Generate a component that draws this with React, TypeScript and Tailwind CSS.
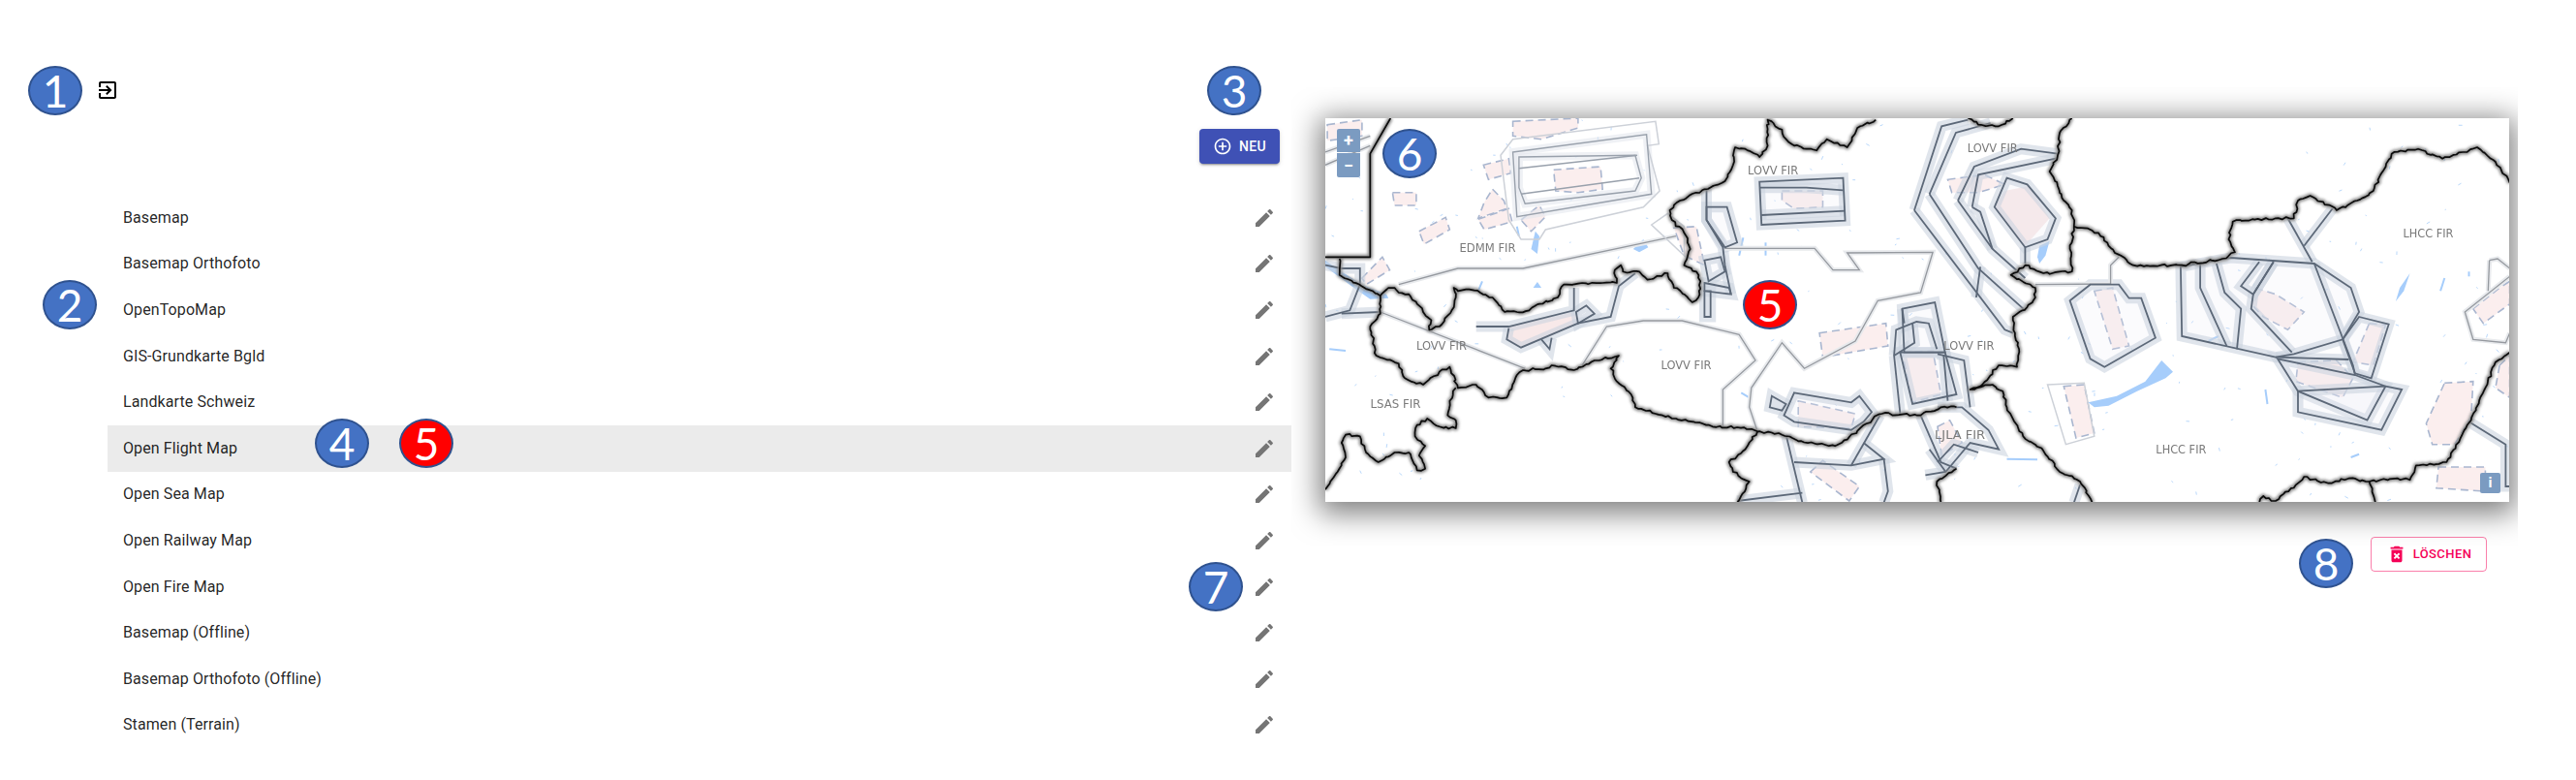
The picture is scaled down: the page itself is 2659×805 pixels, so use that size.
import React from "react";

const rows = [
  "Basemap",
  "Basemap Orthofoto",
  "OpenTopoMap",
  "GIS-Grundkarte Bgld",
  "Landkarte Schweiz",
  "Open Flight Map",
  "Open Sea Map",
  "Open Railway Map",
  "Open Fire Map",
  "Basemap (Offline)",
  "Basemap Orthofoto (Offline)",
  "Stamen (Terrain)",
];

type P = [number, number];
const parse = (s: string): P[] => s.trim().split(/\s+/).map((p) => p.split(",").map(Number) as P);
const a = (s: string): P[] => parse(s).map(([x, y]) => [(x - 20) / 2.376, (y - 65) / 3]);
const b = (s: string): P[] => parse(s).map(([x, y]) => [632 + x / 2.379, (y - 65) / 3]);
const str = (pts: P[]) => pts.map(([x, y]) => `${x.toFixed(1)},${y.toFixed(1)}`).join(" ");

let seed = 17;
const rnd = () => {
  seed = (seed * 16807) % 2147483647;
  return seed / 2147483647;
};
const wiggle = (pts: P[]) => {
  const out: P[] = [];
  for (let i = 0; i < pts.length - 1; i++) {
    const [x0, y0] = pts[i];
    const [x1, y1] = pts[i + 1];
    const len = Math.hypot(x1 - x0, y1 - y0);
    const n = Math.max(1, Math.round(len / 3.5));
    for (let k = 0; k < n; k++) {
      const t = k / n;
      const j = k === 0 ? 0 : 2.6;
      out.push([x0 + (x1 - x0) * t + (rnd() - 0.5) * j, y0 + (y1 - y0) * t + (rnd() - 0.5) * j]);
    }
  }
  out.push(pts[pts.length - 1]);
  return out;
};

const straightBorder: P[][] = [a("20,495 130,495 130,175 180,65")];
const borders: P[][] = [
  a("55,500 55,550 155,615 175,590 190,590 200,605 225,610 245,640 260,665 280,690 275,720 300,710 330,660 340,620 335,590 345,600 365,595 400,605 430,620 460,665 490,665 520,660 545,640 590,620 605,580 650,575 700,575 735,575 730,535 745,520 750,540 790,540 810,565 860,545 875,590 900,610 920,635 935,620 940,570 930,540 900,520 915,470 900,420 870,380 865,350 890,320 950,285 1000,260 1020,210 1025,155 1050,160 1085,185 1105,150 1105,70 1140,100 1150,130 1170,150 1225,165 1250,130 1300,155 1325,95 1370,70"),
  a("155,615 155,670 130,710 145,800 200,825 215,870 260,890 300,850 325,835 345,900 390,890 420,930 465,930 490,860 505,845 560,840 575,830 630,845 680,815 740,800 720,840 735,880 770,920 780,960 830,980 880,995 970,1020 1030,1022 1080,1035 1140,1045 1180,1065 1270,1080 1300,1060 1340,1015 1385,980 1480,985 1530,960 1568,960"),
  a("340,900 325,940 320,985 340,1000 340,1025 300,1020 270,995 245,1015 240,1050 265,1080 250,1110 265,1150 245,1155 225,1100 190,1100 150,1130 120,1100 105,1050 70,1045 60,1070 70,1115 50,1160 20,1215"),
  a("1080,1035 1050,1090 1010,1130 1020,1160 1060,1190 1030,1255"),
  a("1568,1150 1520,1190 1530,1255"),
  b("75,65 100,85 150,90 185,65"),
  b("330,65 300,110 295,180 275,230 295,275 310,320 330,350 335,400 360,405 395,420 420,460 450,490 480,520 600,520 700,500 730,480 715,440 725,385 830,375 875,375 885,320 915,305 980,350 1030,320 1070,290 1090,235 1115,175 1180,160 1240,190 1290,170 1325,155 1370,200 1405,265"),
  b("335,400 325,470 330,540 260,545 215,520 180,550 240,590 240,620 220,650 185,680 190,730 200,780 195,835 150,830 110,890 80,905 135,890 160,910 170,960 210,1050 260,1095 300,1160 350,1190 380,1255"),
  b("790,1255 800,1235 830,1250 880,1200 900,1175 960,1195 1010,1180 1060,1190 1075,1255"),
  b("1060,1190 1130,1180 1160,1185 1175,1140 1250,1130 1290,1040 1310,1000 1345,900 1370,820 1405,790"),
];

const pink: P[][] = [
  a("25,85 110,70 110,120 25,135"),
  a("480,75 640,65 640,95 550,130 480,120"),
  a("580,225 695,215 700,285 640,295 585,290"),
  a("408,210 470,190 475,235 420,255"),
  a("185,295 243,295 243,335 190,335"),
  a("250,415 315,372 325,410 262,455"),
  a("430,285 458,320 465,345 395,375 410,325"),
  a("395,378 470,345 478,385 410,410"),
  a("500,380 545,335 560,370 525,415"),
  a("110,560 160,495 178,535 120,580"),
  a("1140,290 1240,290 1240,340 1170,345 1140,320"),
  a("875,405 930,400 950,520 900,490"),
  a("1232,730 1395,700 1400,770 1240,805"),
  a("1435,790 1510,785 1530,920 1460,945"),
  a("1180,940 1320,980 1310,1025 1180,1020"),
  a("1210,1160 1240,1125 1330,1205 1305,1250"),
  b("25,255 115,240 165,270 100,295 35,295"),
  b("385,600 430,590 470,770 430,780"),
  b("310,895 360,890 385,1040 340,1055"),
  b("780,590 830,610 900,665 860,720 800,680 770,640"),
  b("1060,700 1100,705 1070,830 1020,820"),
  b("885,820 980,815 1020,870 995,930 880,880"),
  b("1315,655 1380,590 1405,570 1405,640 1340,700"),
  b("1245,885 1315,880 1310,990 1270,1075 1215,1075 1200,1010"),
  b("1230,1145 1345,1145 1345,1220 1225,1210"),
  b("1380,830 1405,800 1405,930 1370,900"),
  b("0,1020 30,1000 60,1070 10,1110"),
];
const solidPink: P[][] = [
  a("470,710 630,665 640,700 500,775 465,750"),
  b("140,340 165,290 225,275 275,375 215,460"),
];

const pale: P[][] = [
  a("480,170 808,115 820,300 490,370"),
  a("495,185 780,180 795,250 780,290 510,330 495,280"),
];
const paleOpen: P[][] = [a("495,220 785,180"), a("500,300 790,250")];
const closed: P[][] = [
  a("1085,262 1290,250 1295,382 1090,395"),
  a("955,340 1005,340 1030,450 1000,465 955,380"),
  a("950,505 990,495 1000,540 960,570"),
  a("950,575 1010,590 1015,610 950,600"),
  a("950,600 965,600 965,680 950,680"),
  a("635,665 660,645 680,670 640,700"),
  a("1115,925 1150,950 1140,970 1110,960"),
  a("1170,915 1310,945 1330,925 1360,975 1340,1005 1310,1030 1170,1005 1145,985"),
  a("1435,655 1515,635 1540,790 1440,790"),
  a("1430,790 1460,950 1568,920 1540,790"),
  b("325,630 375,580 445,580 470,622 500,622 535,745 410,835 375,810"),
  b("597,525 600,740 830,805 875,795 995,750 1035,665 1015,590 925,515 720,497"),
  b("1035,680 1108,703 1065,870 1025,855 995,750"),
  b("835,810 885,910 1055,1000 1100,895 1025,860"),
  b("885,910 885,975 1090,1030 1140,905 1100,895"),
  b("140,340 170,250 220,270 290,375 270,440 215,465"),
];
const open: P[][] = [
  a("1085,280 1200,280 1290,288"),
  a("1090,365 1295,352"),
  a("955,285 955,380 995,465 1000,520 1015,610"),
  a("630,590 630,660 470,710 390,710"),
  a("470,715 465,750 500,775 640,700 720,680 740,585 780,545"),
  a("550,750 570,780 575,745"),
  a("20,520 60,530 105,530 105,580 80,660 20,680"),
  a("60,670 155,665"),
  a("1150,1045 1190,1255"),
  a("1170,1130 1310,1140 1390,1120 1340,1070"),
  a("1310,1140 1380,985"),
  a("1390,1120 1400,1220 1390,1255"),
  a("1030,1250 1190,1225"),
  a("1415,800 1430,980"),
  a("1415,800 1420,720 1470,695 1500,700 1520,780"),
  a("1435,655 1440,700"),
  a("1460,700 1465,760 1415,800"),
  a("1480,985 1530,1130 1568,1150"),
  b("-57,350 10,90 75,70"),
  b("-57,350 165,720 185,730"),
  b("-20,300 45,110 130,80"),
  b("-20,300 100,530 215,660"),
  b("50,320 90,215 205,160 295,175"),
  b("50,320 135,470 215,560"),
  b("85,340 100,240 290,190"),
  b("85,340 105,355 135,470"),
  b("105,525 95,620"),
  b("215,465 215,515"),
  b("645,515 645,590 710,770"),
  b("685,515 705,605 745,655 735,780"),
  b("790,510 745,585 775,610 825,510"),
  b("825,510 775,610 770,655 870,790"),
  b("925,515 1020,830 1025,860"),
  b("860,375 920,510"),
  b("900,460 970,345"),
  b("830,805 1010,812"),
  b("0,795 65,815 80,960"),
  b("15,800 25,940"),
  b("0,960 60,960 125,1030 150,1090 80,1070 20,1160 -30,1170"),
  b("100,1100 40,1075 0,1130"),
  b("20,1160 -20,1090"),
  b("1305,1005 1395,1075 1395,1205 1405,1205"),
  b("335,1255 350,1200"),
];
const thin: P[][] = [
  a("200,580 345,530 505,530 880,430"),
  a("1000,468 1220,468 1265,535 1330,535 1300,482 1510,480 1480,605 1375,630 1320,755 1195,840 1140,760 1065,900 1060,960 1080,1035"),
  a("155,665 510,840"),
  a("645,840 710,710 800,692 895,692 1035,735 1075,815 995,905 995,1020"),
  a("20,210 130,150"),
  a("20,170 130,120"),
  b("240,580 425,578 425,520 445,495"),
  b("1355,505 1375,500 1405,530"),
  b("1355,505 1352,600"),
  b("1405,555 1295,665 1315,750 1395,760 1405,730"),
];
const thinClosed: P[][] = [
  a("450,180 480,130 830,75 838,145 810,150 840,290 800,340 560,410 545,440 500,440 470,380"),
  a("820,395 860,360 900,400 900,490"),
  b("270,890 360,885 385,1050 315,1075"),
];
const water: P[][] = [
  a("20,505 60,540 110,580 170,610 175,622 130,625 90,590 20,525"),
  a("535,415 545,430 540,485 525,470"),
  a("775,470 800,440 812,465 790,480"),
  a("540,572 550,590 530,590"),
  b("250,460 275,445 265,490 250,515 245,495"),
  b("370,945 440,925 510,880 550,815 578,850 560,870 490,910 420,955 385,960"),
  b("1160,545 1145,600 1125,632 1135,590"),
];
const waterLines: P[][] = [
  a("30,780 70,785"),
  a("1045,435 1035,490"),
  a("1100,450 1100,490"),
  a("490,400 495,430"),
  a("405,570 395,600"),
  a("1040,915 1060,930"),
  b("170,1120 245,1122"),
  b("1245,560 1235,600"),
  b("1305,540 1305,555"),
  b("805,905 810,950"),
  b("1015,1115 1035,1105"),
  b("665,755 690,740"),
];
const labels: [string, P][] = [
  ["EDMM FIR", a("418,465")[0]],
  ["LOVV FIR", a("1118,225")[0]],
  ["LOVV FIR", a("305,767")[0]],
  ["LOVV FIR", a("905,828")[0]],
  ["LSAS FIR", a("192,947")[0]],
  ["LOVV FIR", b("135,155")[0]],
  ["LOVV FIR", b("77,767")[0]],
  ["LJLA FIR", b("55,1045")[0]],
  ["LHCC FIR", b("1205,420")[0]],
  ["LHCC FIR", b("598,1090")[0]],
];

const specks: [number, number, number, number][] = [];
while (specks.length < 230) {
  const x = rnd() * 1222;
  const y = rnd() * 396;
  const blankNorth = x > 650 && x < 1000 && y < 130;
  const blankSouth = x > 100 && x < 440 && y > 290;
  if (blankNorth || blankSouth) continue;
  const l = 1 + rnd() * 3;
  const t = rnd() * 6.28;
  specks.push([x, y, x + Math.cos(t) * l, y + Math.sin(t) * l]);
}
const wiggled = [...straightBorder, ...borders.map(wiggle)];

function MapDrawing() {
  return (
    <svg viewBox="0 0 1222 396" className="block w-[1222px] h-[396px] blur-[0.4px]">
      <defs>
        <filter id="halo" x="-5%" y="-5%" width="110%" height="110%">
          <feGaussianBlur stdDeviation="1.6" />
        </filter>
      </defs>
      <rect width="1222" height="396" fill="#ffffff" />
      {specks.map((s, i) => (
        <line key={i} x1={s[0]} y1={s[1]} x2={s[2]} y2={s[3]} stroke="#b9d8fb" strokeWidth="1" />
      ))}
      {waterLines.map((p, i) => (
        <polyline key={i} points={str(p)} fill="none" stroke="#a6cdfb" strokeWidth="2" />
      ))}
      {pink.map((p, i) => (
        <polygon key={i} points={str(p)} fill="#fbeeee" stroke="#a9b6cf" strokeWidth="1.6" strokeDasharray="8 5" />
      ))}
      {solidPink.map((p, i) => (
        <polygon key={i} points={str(p)} fill="#f8e9e9" />
      ))}
      {water.map((p, i) => (
        <polygon key={i} points={str(p)} fill="#a6cdfb" />
      ))}
      {pale.map((p, i) => (
        <polygon key={i} points={str(p)} fill="none" stroke="#e4e8ee" strokeOpacity="0.6" strokeWidth="8" />
      ))}
      {closed.map((p, i) => (
        <polygon key={i} points={str(p)} fill="#e9edf3" fillOpacity="0.2" stroke="#ccd4df" strokeOpacity="0.6" strokeWidth="11" />
      ))}
      {open.map((p, i) => (
        <polyline key={i} points={str(p)} fill="none" stroke="#ccd4df" strokeOpacity="0.6" strokeWidth="11" />
      ))}
      {thin.map((p, i) => (
        <polyline key={i} points={str(p)} fill="none" stroke="#e8eaed" strokeWidth="5" />
      ))}
      {thin.map((p, i) => (
        <polyline key={i} points={str(p)} fill="none" stroke="#95999f" strokeWidth="1.3" />
      ))}
      {thinClosed.map((p, i) => (
        <polygon key={i} points={str(p)} fill="none" stroke="#cdd1d8" strokeWidth="1.5" />
      ))}
      {pale.map((p, i) => (
        <polygon key={i} points={str(p)} fill="none" stroke="#99a1ac" strokeWidth="1.4" />
      ))}
      {paleOpen.map((p, i) => (
        <polyline key={i} points={str(p)} fill="none" stroke="#99a1ac" strokeWidth="1.4" />
      ))}
      {closed.map((p, i) => (
        <polygon key={i} points={str(p)} fill="none" stroke="#5c6878" strokeWidth="1.8" />
      ))}
      {open.map((p, i) => (
        <polyline key={i} points={str(p)} fill="none" stroke="#5c6878" strokeWidth="1.8" />
      ))}
      {labels.map(([t, [x, y]], i) => (
        <text key={i} x={x} y={y + 4.5} textAnchor="middle" fontSize="12" fill="#7a7a7a" fontFamily="'DejaVu Sans', sans-serif" textLength={t === "EDMM FIR" ? 58 : 52} lengthAdjust="spacingAndGlyphs">
          {t}
        </text>
      ))}
      <g filter="url(#halo)">
        {wiggled.map((p, i) => (
          <polyline key={i} points={str(p)} fill="none" stroke="#8a8a8a" strokeWidth="5" strokeLinejoin="round" />
        ))}
      </g>
      {wiggled.map((p, i) => (
        <polyline key={i} points={str(p)} fill="none" stroke="#0b0b0b" strokeWidth="1.7" strokeLinejoin="round" />
      ))}
    </svg>
  );
}

function Badge({ n, className, red }: { n: number; className: string; red?: boolean }) {
  return (
    <div
      className={`absolute w-[56px] h-[51px] rounded-[50%] border-[2px] flex items-center justify-center text-white text-[46px] leading-none font-['Lato',sans-serif] ${
        red ? "bg-[#ff0000] border-[#2f528f]" : "bg-[#4472c4] border-[#2f528f]"
      } ${className}`}
    >
      {n}
    </div>
  );
}

function Pencil() {
  return (
    <svg viewBox="0 0 24 24" className="w-6 h-6 fill-[#757575] shrink-0">
      <path d="M3 17.25V21h3.75L17.81 9.94l-3.75-3.75L3 17.25zM20.71 7.04c.39-.39.39-1.02 0-1.41l-2.34-2.34c-.39-.39-1.02-.39-1.41 0l-1.83 1.83 3.75 3.75 1.83-1.83z" />
    </svg>
  );
}

export default function App() {
  return (
    <div className="relative flex w-[2659px] h-[805px] overflow-hidden bg-white font-['Roboto',sans-serif]">
      <div className="w-[1333px] shrink-0 pl-[99px] flex flex-col">
        <div className="h-[201px] shrink-0 flex justify-between items-start pr-[12px]">
          <svg viewBox="0 0 24 24" className="w-6 h-6 mt-[81px] fill-black">
            <path d="M10.09 15.59L11.5 17l5-5-5-5-1.41 1.41L12.67 11H3v2h9.67l-2.58 2.59zM19 3H5c-1.11 0-2 .9-2 2v4h2V5h14v14H5v-4H3v4c0 1.1.89 2 2 2h14c1.1 0 2-.9 2-2V5c0-1.1-.9-2-2-2z" />
          </svg>
          <button className="mt-[133px] w-[83px] h-[36px] rounded bg-[#3f51b5] text-white text-[14px] font-medium tracking-[0.4px] flex items-center justify-center gap-[7px] shadow-[0_3px_1px_-2px_rgba(0,0,0,0.2),0_2px_2px_0_rgba(0,0,0,0.14),0_1px_5px_0_rgba(0,0,0,0.12)]">
            <svg viewBox="0 0 24 24" className="w-5 h-5 fill-white">
              <path d="M13 7h-2v4H7v2h4v4h2v-4h4v-2h-4V7zm-1-5C6.48 2 2 6.48 2 12s4.48 10 10 10 10-4.48 10-10S17.52 2 12 2zm0 18c-4.41 0-8-3.59-8-8s3.59-8 8-8 8 3.59 8 8-3.59 8-8 8z" />
            </svg>
            NEU
          </button>
        </div>
        <ul className="ml-[12px] flex flex-col">
          {rows.map((r, i) => (
            <li
              key={r}
              className={`h-[47.6px] shrink-0 flex items-center justify-between pl-[16px] pr-[16px] text-[16px] tracking-[0.1px] text-[#000000de] ${
                i === 5 ? "bg-[#ebebeb]" : ""
              }`}
            >
              <span>{r}</span>
              <Pencil />
            </li>
          ))}
        </ul>
      </div>

      <div className="flex-1 flex flex-col items-start pt-[90px]">
        <div className="overflow-hidden pl-[35px] pr-[9px] pt-[32px] pb-[46px]">
          <div className="relative w-[1222px] h-[396px] shadow-[0_6px_28px_6px_rgba(0,0,0,0.5)]">
            <MapDrawing />
            <div className="absolute left-[12px] top-[11px] flex flex-col gap-[1px]">
              <div className="w-[24px] h-[24px] rounded-t-[2px] bg-[#7b9bc1] text-white text-[18px] font-bold leading-none flex items-center justify-center">+</div>
              <div className="w-[24px] h-[25px] rounded-b-[2px] bg-[#7b9bc1] text-white text-[18px] font-bold leading-none flex items-center justify-center">−</div>
            </div>
            <div className="absolute left-[1192px] top-[366px] w-[21px] h-[21px] rounded-[2px] bg-[#7b9bc1] text-white text-[15px] font-bold leading-none flex items-center justify-center">i</div>
          </div>
        </div>
        <div className="w-full flex justify-end pr-[92px] -mt-[10px]">
          <button className="w-[120px] h-[36px] rounded border border-[#f5005780] text-[#f50057] text-[13px] font-medium tracking-[0.4px] flex items-center justify-center gap-[6px]">
            <svg viewBox="0 0 24 24" className="w-[22px] h-[22px] fill-[#f50057]">
              <path d="M6 19c0 1.1.9 2 2 2h8c1.1 0 2-.9 2-2V7H6v12zm2.46-7.12l1.41-1.41L12 12.59l2.12-2.12 1.41 1.41L13.41 14l2.12 2.12-1.41 1.41L12 15.41l-2.12 2.12-1.41-1.41L10.59 14l-2.13-2.12zM15.5 4l-1-1h-5l-1 1H5v2h14V4z" />
            </svg>
            LÖSCHEN
          </button>
        </div>
      </div>

      <Badge n={1} className="left-[29px] top-[68px]" />
      <Badge n={2} className="left-[44px] top-[289px]" />
      <Badge n={3} className="left-[1246px] top-[68px]" />
      <Badge n={4} className="left-[325px] top-[432px]" />
      <Badge n={5} red className="left-[412px] top-[432px]" />
      <Badge n={6} className="left-[1427px] top-[133px]" />
      <Badge n={5} red className="left-[1799px] top-[289px]" />
      <Badge n={7} className="left-[1227px] top-[580px]" />
      <Badge n={8} className="left-[2373px] top-[556px]" />
    </div>
  );
}
